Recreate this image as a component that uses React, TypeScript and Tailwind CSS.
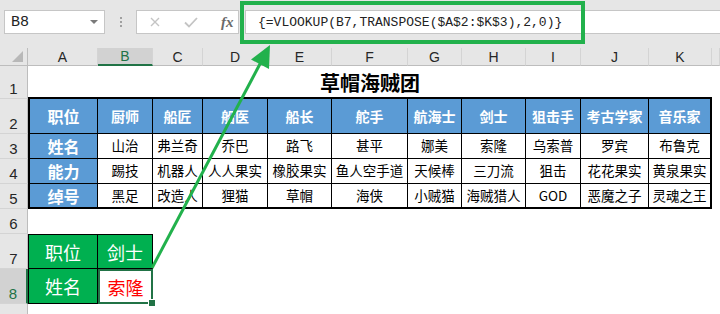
import React from "react";

const colLetters = ["A", "B", "C", "D", "E", "F", "G", "H", "I", "J", "K", ""];
const roles = ["厨师", "船匠", "船医", "船长", "舵手", "航海士", "剑士", "狙击手", "考古学家", "音乐家"];
const names = ["山治", "弗兰奇", "乔巴", "路飞", "甚平", "娜美", "索隆", "乌索普", "罗宾", "布鲁克"];
const powers = ["踢技", "机器人", "人人果实", "橡胶果实", "鱼人空手道", "天候棒", "三刀流", "狙击", "花花果实", "黄泉果实"];
const nicknames = ["黑足", "改造人", "狸猫", "草帽", "海侠", "小贼猫", "海贼猎人", "GOD", "恶魔之子", "灵魂之王"];

const cjk = "font-['Noto_Sans_CJK_SC',sans-serif]";

function RowHead({ n, active }: { n: number; active?: boolean }) {
  return (
    <div
      className={`flex items-end justify-center pb-[2px] text-[15px] leading-none font-['Liberation_Sans',sans-serif] border-b border-b-[#d4d4d4] ${
        active
          ? "bg-[#d2d2d2] border-r-2 border-r-[#217346] text-[#217346]"
          : "bg-[#e6e6e6] border-r border-r-[#bdbdbd] text-[#262626]"
      }`}
    >
      {n}
    </div>
  );
}

function ColHead({ label, active }: { label: string; active?: boolean }) {
  return (
    <div
      className={`flex items-center justify-center text-[14px] leading-none font-['Liberation_Sans',sans-serif] border-r border-r-[#d4d4d4] ${
        active
          ? "bg-[#d2d2d2] border-b-2 border-b-[#217346] text-[#217346]"
          : "bg-[#e6e6e6] border-b border-b-[#bdbdbd] text-[#262626]"
      }`}
    >
      {label}
    </div>
  );
}

function TableRow({
  label,
  items,
  header,
  last,
}: {
  label: string;
  items: string[];
  header?: boolean;
  last?: boolean;
}) {
  const bottom = last ? "border-b-2" : "border-b";
  return (
    <>
      <div
        className={`flex items-center justify-center bg-[#5b9bd5] text-white font-bold text-[16px] leading-none ${cjk} border-l-2 border-r border-black ${bottom}`}
      >
        {label}
      </div>
      {items.map((t, i) => (
        <div
          key={i}
          className={`flex items-center justify-center leading-none whitespace-nowrap ${cjk} border-black ${bottom} ${
            i === items.length - 1 ? "border-r-2" : "border-r"
          } ${header ? "bg-[#5b9bd5] text-white font-bold text-[14px]" : "bg-white text-black text-[13.5px]"}`}
        >
          {t}
        </div>
      ))}
      <div className="bg-white" />
    </>
  );
}

export default function App() {
  return (
    <div className="relative w-[720px] h-[314px] overflow-hidden bg-white">
      {/* formula bar */}
      <div className="h-[48px] bg-[#e6e6e6]">
        <div className="flex pt-[10px] pl-[4px]">
          <div className="w-[101px] h-[24px] bg-white border border-[#c6c6c6] flex items-center justify-between pl-[6px] pr-[6px]">
            <span className="font-['Liberation_Mono',monospace] text-[15px] text-[#222] leading-none">B8</span>
            <span className="w-0 h-0 border-l-[4px] border-r-[4px] border-t-[4px] border-l-transparent border-r-transparent border-t-[#7a7a7a]" />
          </div>
          <div className="w-[31px] h-[24px] flex flex-col items-center justify-center gap-[2px]">
            <span className="w-[2px] h-[2px] bg-[#a0a0a0]" />
            <span className="w-[2px] h-[2px] bg-[#a0a0a0]" />
            <span className="w-[2px] h-[2px] bg-[#a0a0a0]" />
          </div>
          <div className="w-[103px] h-[24px] bg-white border border-[#c6c6c6] flex items-center">
            <svg className="ml-[13px]" width="10" height="10" viewBox="0 0 10 10">
              <path d="M1 1 L9 9 M9 1 L1 9" stroke="#c4c4c4" strokeWidth="1.4" fill="none" />
            </svg>
            <svg className="ml-[24px]" width="14" height="11" viewBox="0 0 14 11">
              <path d="M1 5.5 L5 9.5 L13 1" stroke="#c4c4c4" strokeWidth="1.8" fill="none" />
            </svg>
            <span className="ml-[23px] font-['Liberation_Serif',serif] italic font-bold text-[15px] leading-none text-[#6a6a6a]">
              fx
            </span>
          </div>
          <div className="ml-[6px] flex-1 h-[24px] bg-white border border-[#c6c6c6] flex items-center pl-[12px] mr-[-4px]">
            <span className="font-['Liberation_Mono',monospace] text-[13px] leading-none text-[#222] whitespace-nowrap">
              {"{=VLOOKUP(B7,TRANSPOSE($A$2:$K$3),2,0)}"}
            </span>
          </div>
        </div>
      </div>

      {/* sheet */}
      <div className="grid grid-cols-[28px_70px_55px_50px_65px_64px_76px_54px_64px_55px_68px_63px_1fr] grid-rows-[18px_33px_35px_25px_25px_25px_25px_35px_35px_10px]">
        {/* column headers */}
        <div className="relative bg-[#e6e6e6] border-r border-r-[#bdbdbd] border-b border-b-[#bdbdbd]">
          <svg className="absolute right-[4px] bottom-[3px]" width="11" height="11" viewBox="0 0 11 11">
            <polygon points="11,0 11,11 0,11" fill="#b8b8b8" />
          </svg>
        </div>
        {colLetters.map((c, i) => (
          <ColHead key={i} label={c} active={c === "B"} />
        ))}

        {/* row 1: title */}
        <RowHead n={1} />
        <div
          className={`col-span-11 flex items-center justify-center pt-[3px] text-[20px] font-bold text-black leading-none ${cjk} border-b-2 border-black`}
        >
          草帽海贼团
        </div>
        <div className="bg-white" />

        {/* rows 2–5 */}
        <RowHead n={2} />
        <TableRow label="职位" items={roles} header />
        <RowHead n={3} />
        <TableRow label="姓名" items={names} />
        <RowHead n={4} />
        <TableRow label="能力" items={powers} />
        <RowHead n={5} />
        <TableRow label="绰号" items={nicknames} last />

        {/* row 6 */}
        <RowHead n={6} />
        <div className="col-span-12 bg-white" />

        {/* row 7 */}
        <RowHead n={7} />
        <div
          className={`flex items-center justify-center bg-[#00b050] text-white text-[18px] leading-none ${cjk} border border-black`}
        >
          职位
        </div>
        <div
          className={`flex items-center justify-center bg-[#00b050] text-white text-[18px] leading-none ${cjk} border-t border-r border-b border-black`}
        >
          剑士
        </div>
        <div className="col-span-10 bg-white" />

        {/* row 8 */}
        <RowHead n={8} active />
        <div
          className={`flex items-center justify-center bg-[#00b050] text-white text-[18px] leading-none ${cjk} border-l border-r border-b border-black`}
        >
          姓名
        </div>
        <div
          className={`relative flex items-center justify-center bg-white text-[#ff0000] text-[18px] leading-none ${cjk} border-2 border-[#217346]`}
        >
          索隆
          <span className="absolute right-[-4px] bottom-[-4px] w-[6px] h-[6px] bg-[#217346] outline outline-1 outline-white" />
        </div>
        <div className="col-span-10 bg-white" />

        {/* row 9 */}
        <div className="bg-[#e6e6e6] border-r border-r-[#bdbdbd]" />
        <div className="col-span-12 bg-white" />
      </div>

      {/* callout frame around the formula */}
      <div className="absolute left-[240px] top-[1px] w-[345px] h-[43px] border-[4px] border-[#22b14c] pointer-events-none" />

      {/* callout arrow from B8 to the formula */}
      <svg className="absolute left-0 top-0 pointer-events-none" width="720" height="314" viewBox="0 0 720 314">
        <line x1="152" y1="268" x2="261" y2="62" stroke="#22b14c" strokeWidth="3" />
        <polygon points="270,45 269,69 251,59.5" fill="#22b14c" />
      </svg>
    </div>
  );
}
